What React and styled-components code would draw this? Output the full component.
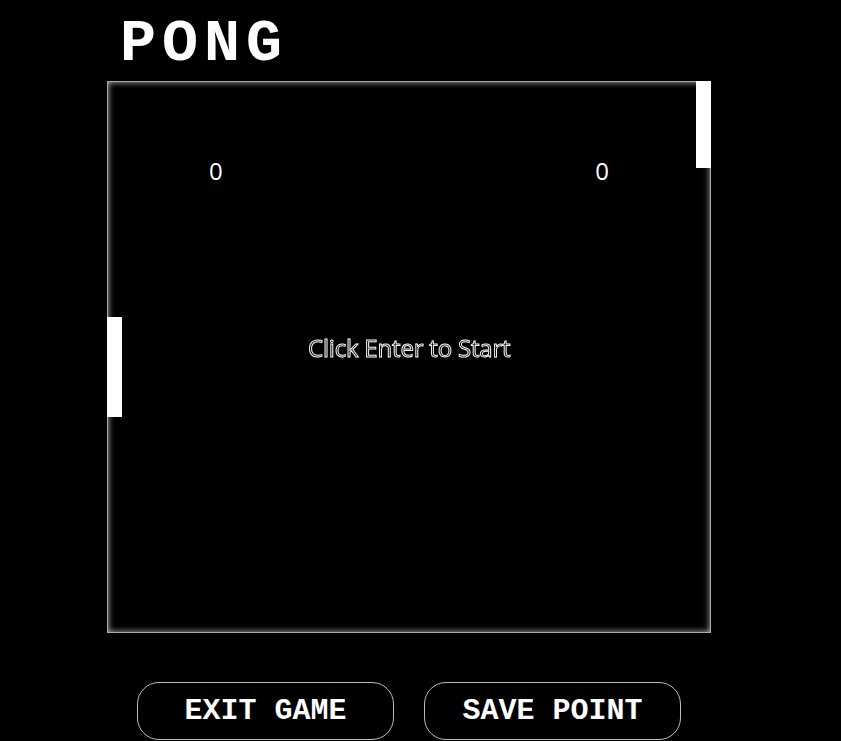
import React from 'react';
import styled, { createGlobalStyle } from 'styled-components';

const GlobalStyle = createGlobalStyle`
    html, body {
        margin: 0;
        background: #000;
    }
`;

const Page = styled.div`
    width: 604px;
    padding: 10px 0 0 107px;
`;

const Title = styled.h1`
    margin: 0 0 3px 13px;
    font-family: "Courier New", "Nimbus Mono PS", "FreeMono", "Liberation Mono", monospace;
    font-weight: 700;
    font-size: 60px;
    line-height: 68px;
    letter-spacing: 6px;
    color: #fff;
`;

const Board = styled.div`
    position: relative;
    box-sizing: border-box;
    width: 604px;
    height: 552px;
    border: 1px solid #aaa;
    box-shadow: inset 0 0 6px rgba(255, 255, 255, 0.75);
    display: flex;
    flex-direction: column;
    align-items: center;
`;

const Paddle = styled.div`
    position: absolute;
    width: 15px;
    height: ${props => props.h}px;
    top: ${props => props.top}px;
    ${props => props.side}: -1px;
    background: #fff;
`;

const ScoreRow = styled.div`
    align-self: stretch;
    display: flex;
    justify-content: space-between;
    padding: 0 101px;
    margin-top: 72px;
`;

const Score = styled.span`
    font-family: "Open Sans", "Noto Sans", sans-serif;
    font-size: 24px;
    color: #fff;
`;

const Message = styled.div`
    margin-top: 144px;
    font-family: "Open Sans", "Noto Sans", sans-serif;
    font-size: 24px;
    letter-spacing: -0.2px;
    color: #000;
    -webkit-text-stroke: 1px #f2f2f2;
    will-change: transform;
`;

const ButtonRow = styled.div`
    display: flex;
    justify-content: center;
    gap: 30px;
    margin-top: 49px;
`;

const Button = styled.button`
    box-sizing: border-box;
    width: 257px;
    height: 58px;
    border: 1px solid #bbb;
    border-radius: 22px;
    background: #000;
    color: #fff;
    font-family: "Courier New", "Nimbus Mono PS", "FreeMono", "Liberation Mono", monospace;
    font-weight: 700;
    font-size: 30px;
    cursor: pointer;
    padding: 0;
`;

const App = () => {
    return (
        <Page>
            <GlobalStyle />
            <Title>PONG</Title>
            <Board>
                <Paddle side="right" top={-1} h={87} />
                <Paddle side="left" top={235} h={100} />
                <ScoreRow>
                    <Score>0</Score>
                    <Score>0</Score>
                </ScoreRow>
                <Message>Click Enter to Start</Message>
            </Board>
            <ButtonRow>
                <Button>EXIT GAME</Button>
                <Button>SAVE POINT</Button>
            </ButtonRow>
        </Page>
    );
};

export default App;
